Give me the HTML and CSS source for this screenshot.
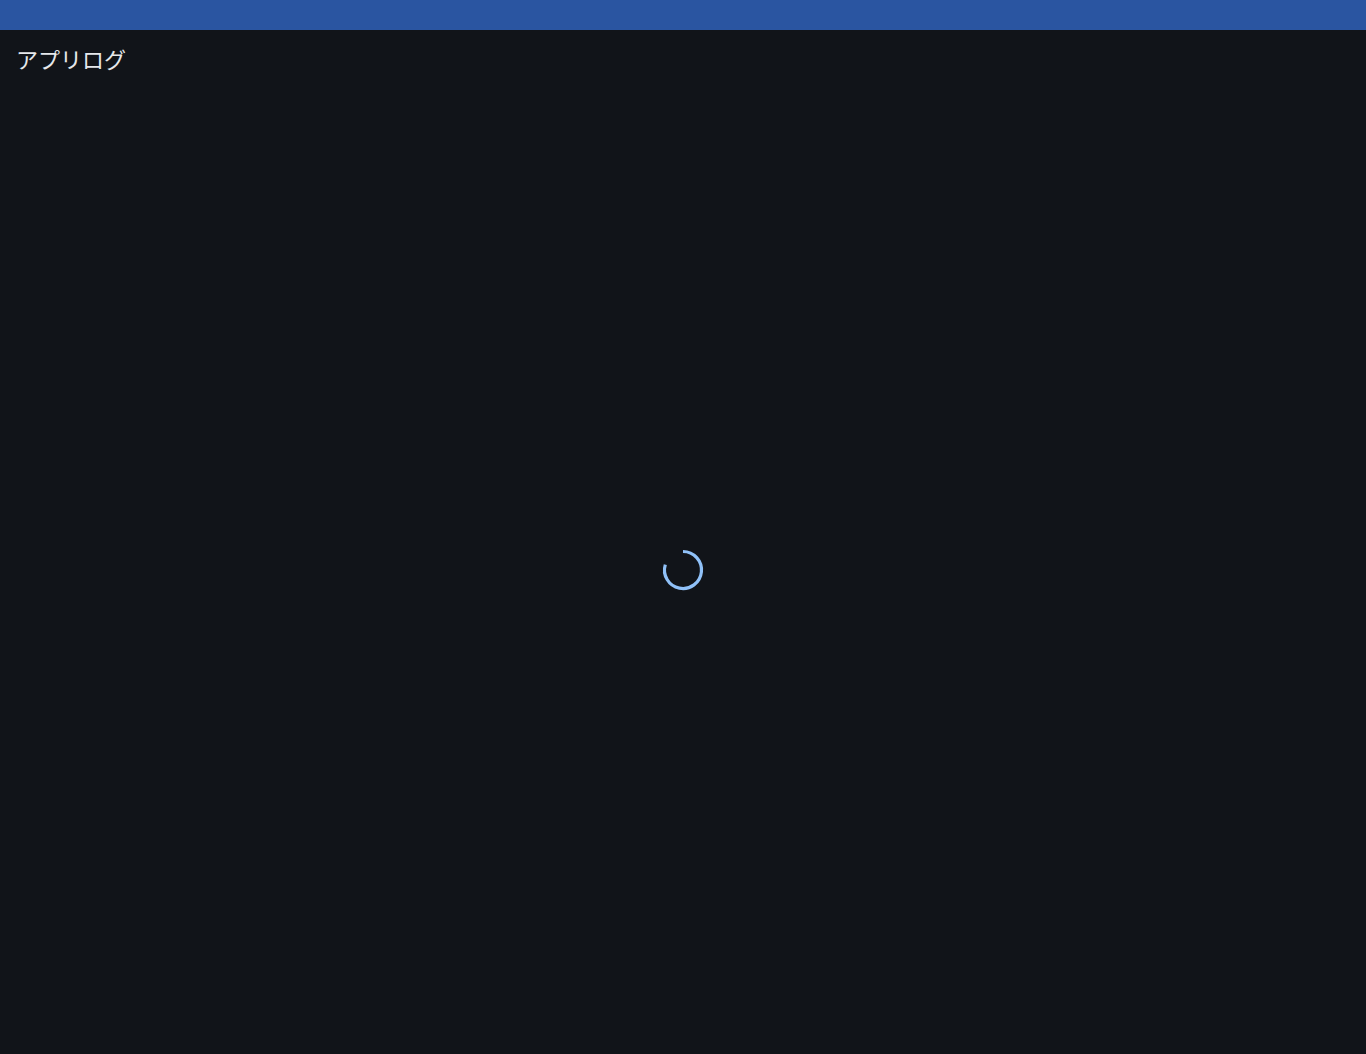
FILE: index.html
```html
<!DOCTYPE html>
<html lang="ja">
<head>
<meta charset="utf-8">
<title>アプリログ</title>
<link rel="stylesheet" href="styles.css">
</head>
<body>
<div class="app">
  <header class="topbar"></header>
  <h1 class="title">アプリログ</h1>
  <main class="content">
    <svg class="spinner" width="44" height="44" viewBox="0 0 44 44" aria-label="読み込み中">
      <path d="M22 3.5 A18.5 18.5 0 1 1 4.3 16.6" fill="none" stroke="#90c1f8" stroke-width="3.2"/>
    </svg>
  </main>
</div>
</body>
</html>
```
FILE: styles.css
```css
html, body {
  margin: 0;
  padding: 0;
  height: 100%;
  background: #111419;
}
.app {
  display: flex;
  flex-direction: column;
  height: 100vh;
  font-family: "Noto Sans CJK JP", "Noto Sans", sans-serif;
  color: #e6e8eb;
}
.topbar {
  height: 30px;
  flex: 0 0 30px;
  background: #2a55a1;
}
.title {
  margin: 0;
  padding: 14px 16px;
  font-size: 22px;
  font-weight: 400;
  line-height: 28px;
}
.content {
  flex: 1;
  display: flex;
  align-items: center;
  justify-content: center;
}
.spinner {
  display: block;
}
```
